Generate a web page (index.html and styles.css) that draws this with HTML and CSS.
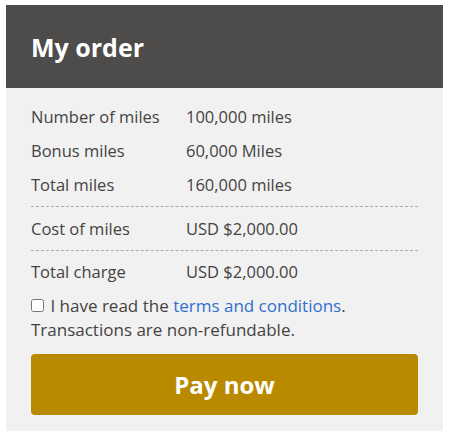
FILE: index.html
```html
<!DOCTYPE html>
<html lang="en">
<head>
    <meta charset="UTF-8">
    <meta name="viewport" content="width=device-width, initial-scale=1.0">
    <title>My order</title>
    <link rel="stylesheet" href="styles.css">
</head>
<body>
    <div class="order">
        <div class="order-header">
            <h1>My order</h1>
        </div>

        <div class="order-body">
            <div class="order-group first">
                <div class="order-row">
                    <span class="label">Number of miles</span>
                    <span class="value">100,000 miles</span>
                </div>
                <div class="order-row">
                    <span class="label">Bonus miles</span>
                    <span class="value">60,000 Miles</span>
                </div>
                <div class="order-row">
                    <span class="label">Total miles</span>
                    <span class="value">160,000 miles</span>
                </div>
            </div>

            <div class="order-group">
                <div class="order-row">
                    <span class="label">Cost of miles</span>
                    <span class="value">USD $2,000.00</span>
                </div>
            </div>

            <div class="order-group last">
                <div class="order-row">
                    <span class="label">Total charge</span>
                    <span class="value">USD $2,000.00</span>
                </div>
            </div>

            <div class="terms">
                <label><input type="checkbox" id="terms"> I have read the <a href="#">terms and conditions</a>.</label><br>
                Transactions are non-refundable.
            </div>

            <button class="pay-button">Pay now</button>
        </div>
    </div>
</body>
</html>
```

FILE: styles.css
```css
body {
    font-family: 'Open Sans', 'Liberation Sans', sans-serif;
    margin: 0;
    padding: 5px 8px 8px 6px;
    background: white;
    color: #454341;
}

.order {
    width: 437px;
}

.order-header {
    background: #4d4c4a;
    height: 83px;
    padding: 0 25px;
    display: flex;
    align-items: center;
}

.order-header h1 {
    margin: 0;
    color: white;
    font-size: 25px;
    font-weight: bold;
}

.order-body {
    background: #f1f1f1;
    padding: 12px 25px 16px;
}

.order-group {
    padding: 5px 0 4px;
    border-bottom: 1px dashed #aaa;
}

.order-group.first {
    padding-top: 0;
}

.order-group.last {
    padding-top: 4px;
    padding-bottom: 0;
    border-bottom: none;
}

.order-row {
    display: flex;
    line-height: 34px;
    font-size: 16.5px;
}

.order-row .label {
    width: 155px;
}

.terms {
    margin-top: 5px;
    font-size: 17px;
    line-height: 24px;
}

.terms input {
    margin: 0 2px 0 0;
    width: 13px;
    height: 13px;
}

.terms a {
    color: #2f6fd0;
    text-decoration: none;
}

.pay-button {
    display: block;
    width: 100%;
    height: 61px;
    margin-top: 12px;
    background: #b98a00;
    color: white;
    border: none;
    border-radius: 4px;
    font-family: inherit;
    font-size: 24px;
    font-weight: bold;
    cursor: pointer;
}
```
